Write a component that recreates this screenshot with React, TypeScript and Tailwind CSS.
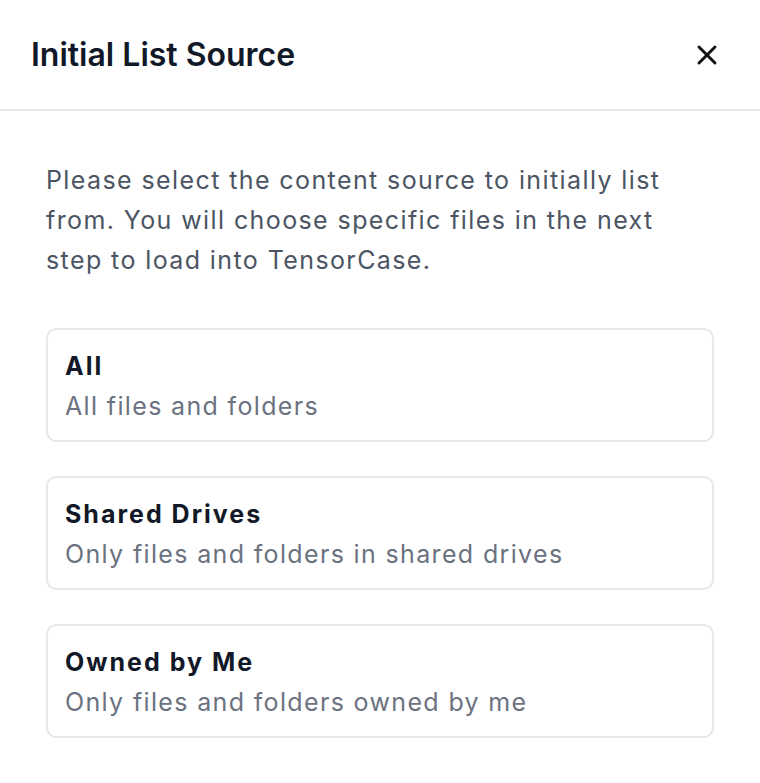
import { X } from "lucide-react";

const options = [
  { title: "All", desc: "All files and folders" },
  { title: "Shared Drives", desc: "Only files and folders in shared drives" },
  { title: "Owned by Me", desc: "Only files and folders owned by me" },
];

export default function App() {
  return (
    <div className="min-h-screen w-[760px] bg-white font-['Inter',sans-serif]">
      {/* Header */}
      <div className="flex h-[111px] items-center justify-between border-b-2 border-[#e5e7eb] pl-[31px] pr-[37px]">
        <h2 className="text-[32px] font-semibold leading-none text-[#111827]">
          Initial List Source
        </h2>
        <button className="text-[#111111]">
          <X size={32} strokeWidth={2.2} />
        </button>
      </div>

      {/* Body */}
      <div className="px-[46px] pt-[49px]">
        <p className="text-[25px] leading-[40px] tracking-[1.4px] text-[#4b5563]">
          Please select the content source to initially list from. You will choose specific files in the next step to load into TensorCase.
        </p>

        <div className="mt-[48px] flex flex-col gap-[34px]">
          {options.map((o) => (
            <button
              key={o.title}
              className="flex h-[114px] flex-col items-start rounded-[10px] border-2 border-[#e5e7eb] px-[17px] pt-[16px] text-left"
            >
              <span className="text-[25px] font-bold leading-[40px] tracking-[2px] text-[#111827]">{o.title}</span>
              <span className="text-[25px] leading-[40px] tracking-[1.35px] text-[#6b7280]">{o.desc}</span>
            </button>
          ))}
        </div>
      </div>
    </div>
  );
}
